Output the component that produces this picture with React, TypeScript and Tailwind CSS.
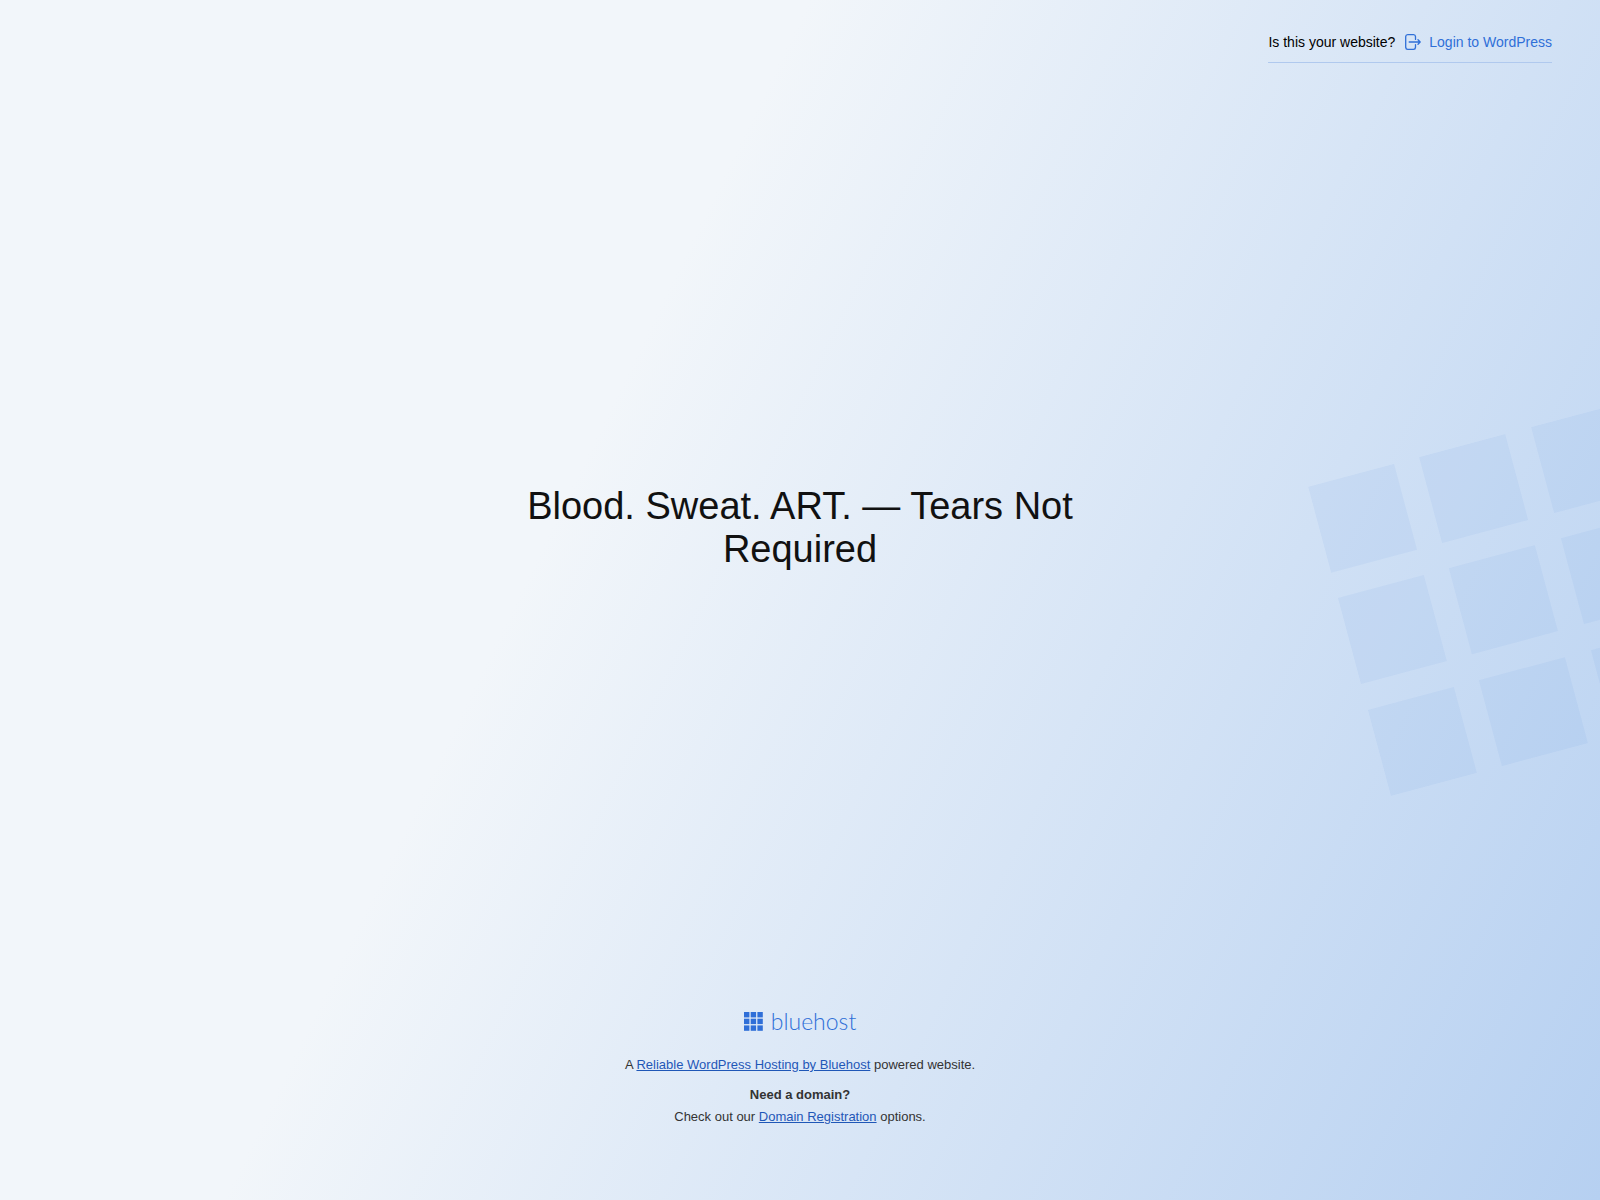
const marks = [0, 115, 231];
const dots = [0, 6.7, 13.4];

function LoginIcon() {
  return (
    <svg className="size-4" viewBox="0 0 16 16" fill="none" stroke="currentColor" strokeWidth="1.3" strokeLinecap="round" strokeLinejoin="round" aria-hidden="true">
      <path d="M10.5 5.4V2.6A2 2 0 0 0 8.5 .7H2.7A2 2 0 0 0 .7 2.6v10.8a2 2 0 0 0 2 1.9h5.8a2 2 0 0 0 2-1.9v-2.8" />
      <path d="M4.2 8h11M13 5.8 15.2 8 13 10.2" />
    </svg>
  );
}

function GridBackdrop() {
  return (
    <div className="pointer-events-none absolute inset-0 overflow-hidden" aria-hidden="true">
      <svg className="absolute top-1/2 -right-16 size-80 -translate-y-1/2 -rotate-15 text-[#2f73d8]/6" viewBox="0 0 320 320" fill="currentColor">
        {marks.map((y) => marks.map((x) => <rect key={`${x}-${y}`} x={x} y={y} width="89" height="89" />))}
      </svg>
    </div>
  );
}

function Logo() {
  return (
    <div className="flex h-5 items-center gap-2 text-[#2f6fd8]">
      <svg className="size-[19px]" viewBox="0 0 19 19" fill="currentColor" aria-hidden="true">
        {dots.map((y) => dots.map((x) => <rect key={`${x}-${y}`} x={x} y={y} width="5.4" height="5.4" />))}
      </svg>
      <span className="font-[Lato,sans-serif] text-[23px] leading-5 font-light">bluehost</span>
    </div>
  );
}

export default function App() {
  return (
    <div className="relative flex min-h-screen flex-col bg-[linear-gradient(116deg,#f2f6fa_37%,#b6d0f1_100%)] font-['Liberation_Sans',Arial,sans-serif]">
      <GridBackdrop />
      <header className="relative flex justify-end px-12 pt-7">
        <div className="flex items-center gap-2.5 border-b border-[#b0c9ee] pt-1 pb-2.5 text-sm text-black">
          <span>Is this your website?</span>
          <a href="#login" className="flex items-center gap-2 text-[#2f6fd8]">
            <LoginIcon />
            Login to WordPress
          </a>
        </div>
      </header>
      <main className="relative flex flex-1 items-center justify-center">
        <h1 className="max-w-[600px] text-center text-[38px] leading-[43px] text-[#111111]">Blood. Sweat. ART. — Tears Not Required</h1>
      </main>
      <footer className="relative flex flex-col items-center pt-[19px] pb-[72px] text-center text-[13px] leading-[22px] text-[#333333]">
        <Logo />
        <p className="mt-[23px]">
          A <a href="#hosting" className="text-[#1f57b7] underline">Reliable WordPress Hosting by Bluehost</a> powered website.
        </p>
        <p className="mt-2 font-bold">Need a domain?</p>
        <p>
          Check out our <a href="#domains" className="text-[#1f57b7] underline">Domain Registration</a> options.
        </p>
      </footer>
    </div>
  );
}
